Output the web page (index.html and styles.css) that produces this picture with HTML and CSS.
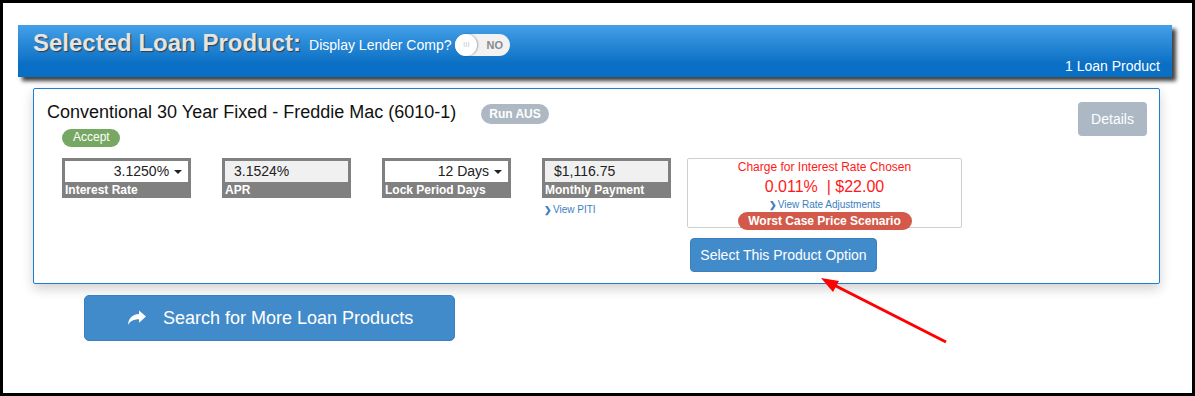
FILE: index.html
```html
<!DOCTYPE html>
<html lang="en">
<head>
  <meta charset="UTF-8">
  <title>Selected Loan Product</title>
  <link rel="stylesheet" href="styles.css">
</head>
<body>
  <div class="frame">
    <div class="banner">
      <div class="banner-top">
        <span class="banner-title">Selected Loan Product:</span>
        <span class="comp-label">Display Lender Comp?</span>
        <span class="toggle">
          <span class="knob">III</span>
          <span class="toggle-text">NO</span>
        </span>
      </div>
      <div class="banner-count">1 Loan Product</div>
    </div>

    <div class="card">
      <div class="card-top">
        <div class="card-titles">
          <div class="title-line">
            <span class="product-name">Conventional 30 Year Fixed - Freddie Mac (6010-1)</span>
            <span class="badge badge-grey">Run AUS</span>
          </div>
          <span class="badge badge-green">Accept</span>
        </div>
        <button class="btn-details">Details</button>
      </div>

      <div class="fields">
        <div class="field-col">
          <div class="field">
            <div class="field-input select">3.1250% <span class="caret"></span></div>
            <div class="field-label">Interest Rate</div>
          </div>
        </div>
        <div class="field-col">
          <div class="field">
            <div class="field-input readonly">3.1524%</div>
            <div class="field-label">APR</div>
          </div>
        </div>
        <div class="field-col">
          <div class="field">
            <div class="field-input select">12 Days <span class="caret"></span></div>
            <div class="field-label">Lock Period Days</div>
          </div>
        </div>
        <div class="field-col">
          <div class="field">
            <div class="field-input readonly">$1,116.75</div>
            <div class="field-label">Monthly Payment</div>
          </div>
          <a class="small-link" href="#"><span class="chev">&#10095;</span>View PITI</a>
        </div>

        <div class="charge-col">
          <div class="charge">
            <div class="charge-head">Charge for Interest Rate Chosen</div>
            <div class="charge-value">0.011% &nbsp;| $22.00</div>
            <a class="small-link" href="#"><span class="chev">&#10095;</span>View Rate Adjustments</a>
            <div class="badge badge-red">Worst Case Price Scenario</div>
          </div>
          <button class="btn-blue btn-select">Select This Product Option</button>
        </div>
      </div>
    </div>

    <button class="btn-blue btn-search">
      <svg class="share-icon" viewBox="0 0 20 16" width="20" height="16">
        <path d="M19 6.5 L12 0.5 V4 C5 4.3 1.5 8.5 1 15 C3 11 6.5 9.3 12 9.2 V12.8 Z" fill="#fff"/>
      </svg>
      Search for More Loan Products
    </button>

    <!-- annotation arrow -->
    <svg class="arrow" width="1195" height="396" viewBox="0 0 1195 396">
      <line x1="946" y1="342" x2="832" y2="284" stroke="#ff0000" stroke-width="3"/>
      <polygon points="821,278 839,281 833,292" fill="#ff0000"/>
    </svg>
  </div>
</body>
</html>
```

FILE: styles.css
```css
body {
  margin: 0;
  font-family: "Liberation Sans", Arial, sans-serif;
  background: #fff;
}

.frame {
  position: relative;
  width: 1195px;
  height: 396px;
  box-sizing: border-box;
  border: 3px solid #000;
  padding-top: 22px;
  overflow: hidden;
}

/* Header banner */
.banner {
  margin-left: 15px;
  width: 1154px;
  height: 52px;
  box-sizing: border-box;
  background: linear-gradient(#45a0e8, #0a6fc4 75%, #0670c6);
  box-shadow: 4px 4px 4px rgba(0, 0, 0, 0.75);
  display: flex;
  flex-direction: column;
  justify-content: space-between;
  padding: 5px 12px 3px 15px;
}

.banner-top {
  display: flex;
  align-items: center;
  height: 26px;
}

.banner-title {
  font-size: 24px;
  font-weight: bold;
  color: #e4e4e4;
  text-shadow: 1px 1px 1px #3a3a3a;
}

.comp-label {
  font-size: 14px;
  color: #fff;
  margin-left: 8px;
  margin-top: 4px;
}

.toggle {
  display: inline-flex;
  align-items: center;
  width: 55px;
  height: 22px;
  margin-left: 4px;
  margin-top: 3px;
  background: #f2f2f2;
  border-radius: 11px;
  position: relative;
}

.knob {
  width: 22px;
  height: 22px;
  border-radius: 50%;
  background: #fff;
  box-shadow: 1px 0 2px rgba(0, 0, 0, 0.3);
  color: #ccc;
  font-size: 8px;
  line-height: 22px;
  text-align: center;
}

.toggle-text {
  font-size: 11px;
  font-weight: bold;
  color: #8a8a8a;
  margin-left: 9px;
}

.banner-count {
  text-align: right;
  font-size: 14px;
  color: #fff;
}

/* Card */
.card {
  margin: 11px 0 0 30px;
  width: 1127px;
  height: 196px;
  box-sizing: border-box;
  border: 1px solid #1c7dd6;
  border-radius: 2px;
  box-shadow: 0 5px 12px rgba(0, 0, 0, 0.18);
  padding: 12px 12px 0 13px;
}

.card-top {
  display: flex;
  justify-content: space-between;
  align-items: flex-start;
}

.card-titles {
  display: flex;
  flex-direction: column;
  align-items: flex-start;
}

.title-line {
  display: flex;
  align-items: center;
  height: 22px;
}

.product-name {
  font-size: 18px;
  color: #111;
}

.badge {
  display: inline-block;
  color: #fff;
  font-size: 12px;
  font-weight: bold;
  border-radius: 10px;
  text-align: center;
}

.badge-grey {
  background: #adb8c3;
  height: 20px;
  line-height: 20px;
  padding: 0 8px;
  margin-left: 25px;
  margin-top: 3px;
}

.badge-green {
  background: #76a863;
  font-weight: normal;
  height: 18px;
  line-height: 17px;
  padding: 0 10px 0 11px;
  margin: 6px 0 0 15px;
}

.btn-details {
  margin-top: 1px;
  width: 69px;
  height: 34px;
  background: #acb9c5;
  color: #fff;
  border: none;
  border-radius: 4px;
  font-family: inherit;
  font-size: 14px;
}

/* Fields row */
.fields {
  display: flex;
  margin: 11px 0 0 15px;
}

.field-col {
  width: 129px;
  margin-right: 31px;
}

.field {
  height: 40px;
  background: #808080;
  padding: 3px 3px 0 3px;
  box-sizing: border-box;
}

.field-input {
  height: 21px;
  line-height: 21px;
  font-size: 14px;
  color: #222;
  box-sizing: border-box;
}

.field-input.select {
  background: #fff;
  text-align: right;
  padding-right: 6px;
}

.field-input.readonly {
  background: #f0f0f0;
  padding-left: 9px;
}

.caret {
  display: inline-block;
  width: 0;
  height: 0;
  border-left: 4px solid transparent;
  border-right: 4px solid transparent;
  border-top: 4px solid #222;
  vertical-align: middle;
  margin-left: 1px;
}

.field-label {
  font-size: 12px;
  font-weight: bold;
  color: #fff;
  line-height: 14px;
  padding-top: 1px;
}

.small-link {
  display: block;
  font-size: 10px;
  color: #3a7ec2;
  text-decoration: none;
  margin-top: 6px;
  margin-left: 2px;
}

.chev {
  font-size: 9px;
  font-weight: bold;
  margin-right: 1px;
}

.charge-col {
  margin-left: -15px;
}

.charge {
  width: 275px;
  height: 70px;
  box-sizing: border-box;
  border: 1px solid #cfcfcf;
  border-radius: 2px;
  display: flex;
  flex-direction: column;
  align-items: center;
  padding-top: 1px;
}

.charge-head {
  font-size: 12px;
  color: #ff1a1a;
  line-height: 14px;
}

.charge-value {
  font-size: 16px;
  color: #ff1a1a;
  line-height: 18px;
  margin-top: 4px;
}

.charge .small-link {
  margin: 3px 0 0 0;
  line-height: 12px;
}

.badge-red {
  background: #d35a4b;
  width: 174px;
  height: 18px;
  line-height: 18px;
  margin-top: 1px;
  border-radius: 9px;
}

.btn-blue {
  background: #428bca;
  color: #fff;
  border: 1px solid #3a80bd;
  font-family: inherit;
}

.btn-select {
  display: block;
  width: 187px;
  height: 34px;
  margin: 10px 0 0 3px;
  border-radius: 4px;
  font-size: 14px;
}

.btn-search {
  display: flex;
  align-items: center;
  margin: 11px 0 0 81px;
  width: 371px;
  height: 46px;
  border-radius: 5px;
  font-size: 18px;
  padding: 0 0 0 42px;
}

.share-icon {
  margin-right: 16px;
}

.arrow {
  position: absolute;
  left: -3px;
  top: -3px;
  pointer-events: none;
}
```
